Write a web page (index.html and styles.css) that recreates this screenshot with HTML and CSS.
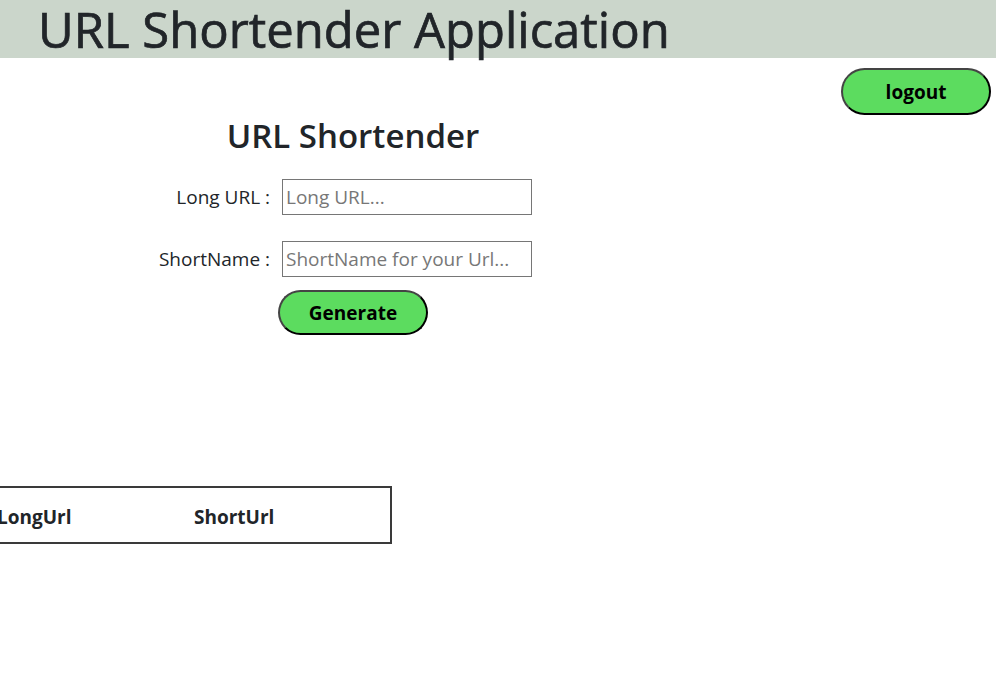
FILE: index.html
```html
<!DOCTYPE html>
<html>
<head>
<meta charset="utf-8">
<link rel="stylesheet" href="styles.css">
</head>
<body>
<header class="topbar">
  <h1 class="app-title">URL Shortender Application</h1>
</header>
<div class="logout-row">
  <button class="pill-btn logout-btn">logout</button>
</div>
<main class="form-col">
  <h2 class="form-title">URL Shortender</h2>
  <div class="field-row">
    <label class="field-label">Long URL :</label>
    <input class="field-input" type="text" placeholder="Long URL...">
  </div>
  <div class="field-row row-two">
    <label class="field-label">ShortName :</label>
    <input class="field-input" type="text" placeholder="ShortName for your Url...">
  </div>
  <div class="btn-row">
    <button class="pill-btn gen-btn">Generate</button>
  </div>
</main>
<section class="table-wrap">
  <table class="url-table">
    <thead>
      <tr><th class="col-long">LongUrl</th><th class="col-short">ShortUrl</th></tr>
    </thead>
  </table>
</section>
</body>
</html>
```
FILE: styles.css
```css
html, body {
  margin: 0;
  padding: 0;
  background: #fff;
  color: #212529;
  font-family: "Open Sans", "Noto Sans", sans-serif;
  overflow: hidden;
}
.topbar {
  background: #cbd6cb;
  height: 58px;
}
.app-title {
  margin: 0;
  padding-left: 38px;
  font-size: 49px;
  font-weight: 400;
  line-height: 58px;
  white-space: nowrap;
  -webkit-text-stroke: 0.7px #212529;
}
.logout-row {
  display: flex;
  justify-content: flex-end;
  padding: 10px 5px 0 0;
}
.pill-btn {
  background: #5cdc5f;
  border: 2px outset #444;
  border-radius: 24px;
  font-family: "Open Sans", sans-serif;
  font-weight: 700;
  font-size: 19px;
  color: #000;
  width: 150px;
  padding: 0;
}
.logout-btn {
  height: 47px;
}
.form-col {
  width: 706px;
  margin-top: -4px;
}
.form-title {
  text-align: center;
  margin: 0 0 18px;
  font-size: 33px;
  font-weight: 600;
  line-height: 50px;
}
.field-row {
  display: grid;
  grid-template-columns: 270px 250px;
  column-gap: 12px;
  align-items: center;
  margin-bottom: 26px;
}
.row-two {
  margin-bottom: 13px;
}
.field-label {
  text-align: right;
  font-size: 19px;
}
.field-input {
  box-sizing: border-box;
  height: 36px;
  border: 1px solid #767676;
  font-family: "Open Sans", sans-serif;
  font-size: 19px;
  padding: 0 3px;
  margin: 0;
}
.field-input::placeholder {
  color: #777;
}
.btn-row {
  padding-left: 278px;
}
.gen-btn {
  height: 45px;
}
.table-wrap {
  margin-top: 151px;
  margin-left: -10px;
}
.url-table {
  border: 2px solid #3a3a3a;
  border-collapse: collapse;
  width: 402px;
  height: 58px;
}
.url-table th {
  text-align: left;
  font-size: 19px;
  font-weight: 700;
  padding: 4px 0 0;
}
.col-long {
  width: 197px;
  padding-left: 5px !important;
}
```
